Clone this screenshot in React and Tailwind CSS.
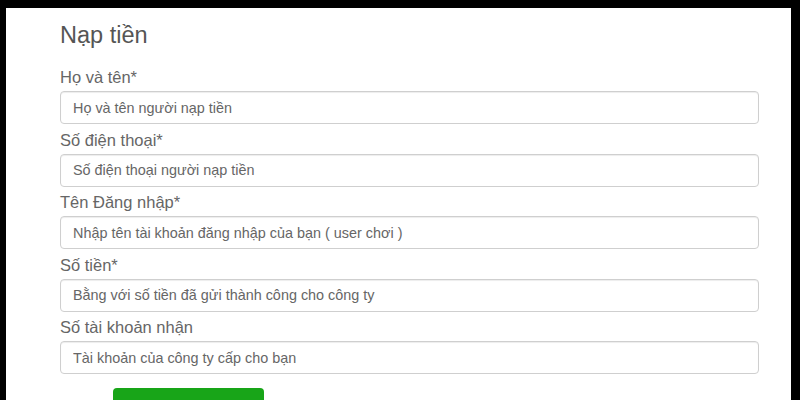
import React from "react";

const fields = [
  { label: "Họ và tên*", ph: "Họ và tên người nạp tiền" },
  { label: "Số điện thoại*", ph: "Số điện thoại người nạp tiền" },
  { label: "Tên Đăng nhập*", ph: "Nhập tên tài khoản đăng nhập của bạn ( user chơi )" },
  { label: "Số tiền*", ph: "Bằng với số tiền đã gửi thành công cho công ty" },
  { label: "Số tài khoản nhận", ph: "Tài khoản của công ty cấp cho bạn" },
];

export default function App() {
  return (
    <div
      className="w-[800px] h-[400px] bg-black pt-[8px] pl-[6px] pr-[9px] overflow-hidden"
      style={{ fontFamily: '"Liberation Sans", Arial, sans-serif' }}
    >
      <div className="h-full bg-white pl-[54px] pt-[14px] overflow-hidden">
        <div className="w-[699px]">
          <h1 className="text-[23.5px] leading-[26px] text-[#555] mb-[19px]">Nạp tiền</h1>
          {fields.map((f) => (
            <div key={f.label}>
              <div className="mt-[5.5px] mb-[4px] text-[16.5px] leading-[20px] text-[#666]">{f.label}</div>
              <input
                readOnly
                placeholder={f.ph}
                className="block w-full h-[33px] px-[12px] text-[14.4px] text-[#666] placeholder:text-[#666] bg-white border border-[#cfcfcf] rounded-[4px] shadow-[inset_0_1px_1px_rgba(0,0,0,0.075)] outline-none"
              />
            </div>
          ))}
          <div className="pl-[53px] pt-[14px]">
            <div className="w-[151px] h-[40px] bg-[#18a518] rounded-[4px]" />
          </div>
        </div>
      </div>
    </div>
  );
}
